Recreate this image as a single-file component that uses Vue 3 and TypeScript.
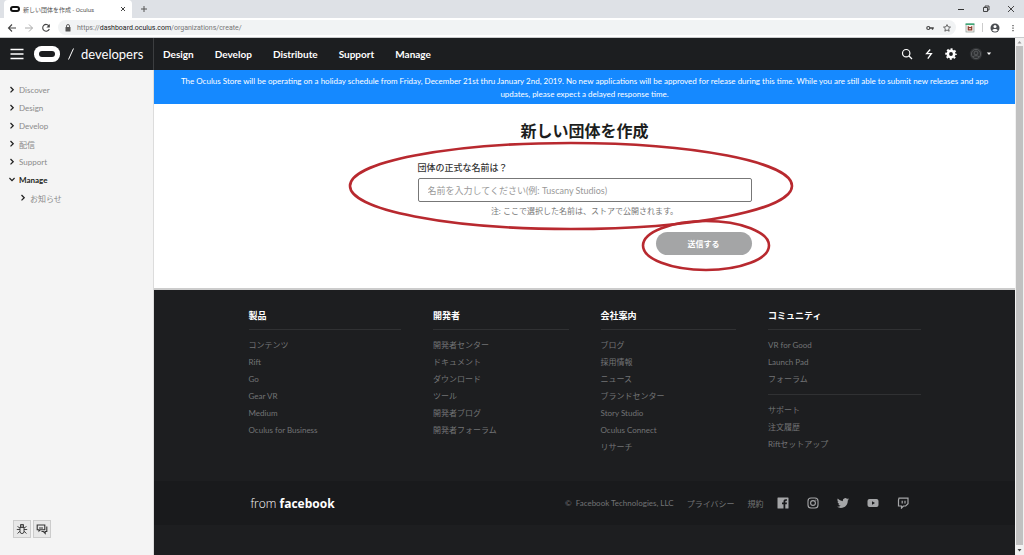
<script setup lang="ts">
import { ref } from 'vue'

interface LinkGroup {
  title: string
  sections: string[][]
}

const organizationName = ref('')
const topLinks: string[] = ['Design', 'Develop', 'Distribute', 'Support', 'Manage']
const sideLinks: string[] = ['Discover', 'Design', 'Develop', '配信', 'Support']
const groups: LinkGroup[] = [
  { title: '製品', sections: [['コンテンツ', 'Rift', 'Go', 'Gear VR', 'Medium', 'Oculus for Business']] },
  {
    title: '開発者',
    sections: [['開発者センター', 'ドキュメント', 'ダウンロード', 'ツール', '開発者ブログ', '開発者フォーラム']],
  },
  {
    title: '会社案内',
    sections: [['ブログ', '採用情報', 'ニュース', 'ブランドセンター', 'Story Studio', 'Oculus Connect', 'リサーチ']],
  },
  {
    title: 'コミュニティ',
    sections: [
      ['VR for Good', 'Launch Pad', 'フォーラム'],
      ['サポート', '注文履歴', 'Riftセットアップ'],
    ],
  },
]
</script>

<template>
  <div class="window">
    <div class="tabstrip">
      <div class="tab">
        <svg class="favicon" viewBox="0 0 10 6"><rect x="1" y="1" width="8" height="4" rx="2" fill="none" stroke="#111" stroke-width="2" /></svg>
        <span class="tab-title">新しい団体を作成 - Oculus</span>
        <button class="plain" aria-label="Close tab">
          <svg width="6" height="6" viewBox="0 0 6 6"><path d="M1 1l4 4M5 1L1 5" stroke="#444" fill="none" /></svg>
        </button>
      </div>
      <button class="plain new-tab" aria-label="New tab">
        <svg width="8" height="8" viewBox="0 0 8 8"><path d="M4 1v6M1 4h6" stroke="#555" fill="none" /></svg>
      </button>
      <div class="window-controls">
        <button class="plain" aria-label="Minimize">
          <svg width="8" height="8" viewBox="0 0 8 8"><path d="M1 4.500h6" stroke="#333" fill="none" /></svg>
        </button>
        <button class="plain" aria-label="Restore">
          <svg width="8" height="8" viewBox="0 0 8 8"><path d="M1.500 2.500h4v4h-4zM3 2.500V1h4v4H5.500" stroke="#333" fill="none" stroke-width=".9" /></svg>
        </button>
        <button class="plain" aria-label="Close window">
          <svg width="8" height="8" viewBox="0 0 8 8"><path d="M1 1l6 6M7 1L1 7" stroke="#333" fill="none" stroke-width=".9" /></svg>
        </button>
      </div>
    </div>

    <div class="toolbar">
      <button class="plain" aria-label="Back">
        <svg width="10" height="10" viewBox="0 0 10 10"><path d="M9 5H1.500M5 1.500L1.500 5 5 8.500" stroke="#444" stroke-width="1.100" fill="none" /></svg>
      </button>
      <button class="plain" aria-label="Forward">
        <svg width="10" height="10" viewBox="0 0 10 10"><path d="M1 5h7.500M5 1.500L8.500 5 5 8.500" stroke="#aaa" stroke-width="1" fill="none" /></svg>
      </button>
      <button class="plain" aria-label="Reload">
        <svg width="10" height="10" viewBox="0 0 10 10"><path d="M8 3A3.400 3.400 0 1 0 8.300 6" stroke="#444" stroke-width="1.100" fill="none" /><path d="M8.800 1v3.400H5.400z" fill="#444" /></svg>
      </button>
      <div class="address">
        <svg width="6" height="8" viewBox="0 0 6 8"><rect x=".5" y="3" width="5" height="4.500" rx=".5" fill="#555" /><path d="M1.500 3.500V2a1.500 1.500 0 0 1 3 0v1.500" stroke="#555" fill="none" stroke-width=".9" /></svg>
        <span class="url">https://<b>dashboard.oculus.com</b>/organizations/create/</span>
        <button class="plain" aria-label="Saved passwords">
          <svg width="8" height="8" viewBox="0 0 8 8"><circle cx="2.300" cy="4" r="1.500" fill="none" stroke="#444" stroke-width="1.200" /><path d="M4 4h3.800M6.500 4v1.800" stroke="#444" stroke-width="1.300" fill="none" /></svg>
        </button>
        <button class="plain" aria-label="Bookmark">
          <svg width="8" height="8" viewBox="0 0 8 8"><path d="M4 .6l1 2.200 2.500.3-1.850 1.650.5 2.450L4 6l-2.150 1.200.5-2.450L.5 3.100 3 2.800z" stroke="#444" stroke-width=".8" fill="none" /></svg>
        </button>
      </div>
      <button class="plain" aria-label="Extension">
        <svg width="10" height="10" viewBox="0 0 10 10"><rect x="1" y="1" width="8" height="8" fill="#f7f2ee" stroke="#8a9a94" stroke-width=".7" /><path d="M.6 1.200h8.800" stroke="#3fa878" stroke-width="1.600" /><path d="M3.300 3.300v3.500h3.400V3.300M3.300 4.600h3.400" fill="none" stroke="#8c3a2c" stroke-width="1.200" /></svg>
      </button>
      <span class="divider"></span>
      <button class="plain profile" aria-label="Profile">
        <svg width="10" height="10" viewBox="0 0 10 10"><circle cx="5" cy="5" r="4.500" fill="#4a4d51" /><circle cx="5" cy="3.600" r="1.500" fill="#fff" /><path d="M2.200 7.200c1-1.700 4.600-1.700 5.600 0-1.300 1.700-4.300 1.700-5.600 0z" fill="#fff" /></svg>
      </button>
      <button class="plain" aria-label="Browser menu">
        <svg width="6" height="8" viewBox="0 0 6 8"><path d="M2.400 1h1.200v1.200H2.400zM2.400 3.500h1.200v1.200H2.400zM2.400 6h1.200v1.200H2.400z" fill="#444" /></svg>
      </button>
    </div>

    <div class="viewport">
      <div class="site">
        <header class="header">
          <div class="brand">
            <button class="plain" aria-label="Open menu">
              <svg width="14" height="12" viewBox="0 0 14 12"><path d="M.5 1.500h13M.5 6h13M.5 10.500h13" stroke="#fff" stroke-width="1.500" /></svg>
            </button>
            <a class="logo" href="#" aria-label="Oculus">
              <svg width="26" height="16" viewBox="0 0 26 16"><rect width="26" height="16" rx="7.500" fill="#fff" /><rect x="5" y="5" width="16" height="6" rx="3" fill="#1c1e20" /></svg>
            </a>
            <svg width="8" height="12" viewBox="0 0 8 12"><path d="M1.500 11.500L6.500.5" stroke="#fff" fill="none" /></svg>
            <span class="brand-name">developers</span>
          </div>
          <nav class="top-nav">
            <a v-for="link in topLinks" :key="link" href="#">{{ link }}</a>
          </nav>
          <div class="tools">
            <button class="plain" aria-label="Search">
              <svg width="12" height="12" viewBox="0 0 12 12"><circle cx="5.200" cy="5.200" r="3.700" stroke="#fff" stroke-width="1.200" fill="none" /><path d="M8 8l3 3" stroke="#fff" stroke-width="1.300" /></svg>
            </button>
            <button class="plain" aria-label="Activity">
              <svg width="8" height="12" viewBox="0 0 8 12"><path d="M5.200 1.500L1.600 5.700h4.800L2.800 10.600" stroke="#fff" stroke-width="1.300" fill="none" /></svg>
            </button>
            <button class="plain" aria-label="Settings">
              <svg width="12" height="12" viewBox="0 0 12 12"><circle cx="6" cy="6" r="3.200" fill="none" stroke="#fff" stroke-width="2.600" /><circle cx="6" cy="6" r="4.900" fill="none" stroke="#fff" stroke-width="1.800" stroke-dasharray="1.950 1.900" stroke-dashoffset="1" /></svg>
            </button>
            <button class="plain account" aria-label="Account">
              <svg width="14" height="14" viewBox="0 0 14 14"><circle cx="7" cy="7" r="6.200" fill="#303234" /><circle cx="7" cy="7" r="4.600" fill="none" stroke="#606264" stroke-width=".8" /><circle cx="7" cy="6" r="1.900" fill="none" stroke="#606264" stroke-width=".8" /><path d="M4 10c1.300-1.800 4.700-1.800 6 0" fill="none" stroke="#606264" stroke-width=".8" /></svg>
              <svg width="6" height="4" viewBox="0 0 6 4"><path d="M.8.500h4.400L3 3z" fill="#fff" /></svg>
            </button>
          </div>
        </header>

        <div class="body">
          <aside class="sidebar">
            <nav class="side-nav">
              <a v-for="link in sideLinks" :key="link" href="#">
                <svg width="6" height="8" viewBox="0 0 6 8"><path d="M1.500 1l2.700 2.700L1.500 6.400" stroke="#222" stroke-width="1.300" fill="none" /></svg>
                {{ link }}
              </a>
              <a class="current" href="#">
                <svg width="6" height="8" viewBox="0 0 6 8"><path d="M.4 2l2.600 2.600L5.600 2" stroke="#222" stroke-width="1.300" fill="none" /></svg>
                Manage
              </a>
              <a class="child" href="#">
                <svg width="6" height="8" viewBox="0 0 6 8"><path d="M1.500 1l2.700 2.700L1.500 6.400" stroke="#222" stroke-width="1.300" fill="none" /></svg>
                お知らせ
              </a>
            </nav>
            <div class="feedback">
              <button aria-label="Report a bug">
                <svg width="12" height="12" viewBox="0 0 12 12" fill="none" stroke="#333" stroke-width=".9"><path d="M4 4.500h4v3.800a2 2.300 0 0 1-4 0zM4.500 4.500v-3h3v3M4.500 3h3M4 6.500H.800M8 6.500h3.200M4 5L1.500 3.500M8 5l2.500-1.500M4 8.200L1.500 10.500M8 8.200l2.500 2.300" /></svg>
              </button>
              <button aria-label="Send feedback">
                <svg width="12" height="12" viewBox="0 0 12 12" fill="none" stroke="#333" stroke-width="1.100"><path d="M1.200 2h7.600v4.800H4.200L3 8V6.800H1.200zM10.800 3.500v5H9.200v1.800L7.400 8.500H5.500M3 5h4" /></svg>
              </button>
            </div>
          </aside>

          <div class="content">
            <p class="notice">The Oculus Store will be operating on a holiday schedule from Friday, December 21st thru January 2nd, 2019. No new applications will be approved for release during this time. While you are still able to submit new releases and app updates, please expect a delayed response time.</p>
            <main class="main">
              <form class="form" @submit.prevent>
                <h1>新しい団体を作成</h1>
                <label for="organization">団体の正式な名前は？</label>
                <input id="organization" v-model="organizationName" type="text" placeholder="名前を入力してください(例: Tuscany Studios)" />
                <p class="hint">注: ここで選択した名前は、ストアで公開されます。</p>
                <button class="submit" type="submit">送信する</button>
                <svg class="marks" width="450" height="134" viewBox="0 0 450 134" fill="none" stroke="#b8292f" stroke-width="2.600">
                  <ellipse cx="225" cy="46" rx="221" ry="43" />
                  <ellipse cx="360" cy="105.500" rx="63" ry="24.500" />
                </svg>
              </form>
            </main>

            <footer class="footer">
              <div class="groups">
                <section v-for="group in groups" :key="group.title" class="group">
                  <h2>{{ group.title }}</h2>
                  <ul v-for="(section, index) in group.sections" :key="index">
                    <li v-for="item in section" :key="item"><a href="#">{{ item }}</a></li>
                  </ul>
                </section>
              </div>
              <div class="legal">
                <div class="legal-inner">
                  <span class="parent">from <b>facebook</b></span>
                  <span class="copyright">©&nbsp; Facebook Technologies, LLC</span>
                  <a href="#">プライバシー</a>
                  <a href="#">規約</a>
                  <div class="social">
                    <a href="#" aria-label="Facebook">
                      <svg width="12" height="12" viewBox="0 0 12 12"><path d="M1 .5h10a.5.500 0 0 1 .5.500v10a.5.500 0 0 1-.5.500H8.300V7.300h1.400l.3-1.700H8.300V4.700c0-.6.300-.9.900-.9H10V2.300H8.700c-1.400 0-2.200.8-2.200 2.200v1.100H5v1.700h1.500v4.200H1a.5.500 0 0 1-.5-.5V1A.5.500 0 0 1 1 .5z" fill="#a5a6a8" /></svg>
                    </a>
                    <a href="#" aria-label="Instagram">
                      <svg width="12" height="12" viewBox="0 0 12 12" fill="none" stroke="#a5a6a8" stroke-width="1.100"><rect x="1" y="1" width="10" height="10" rx="3" /><circle cx="6" cy="6" r="2.400" /><circle cx="8.900" cy="3.100" r=".4" fill="#a5a6a8" stroke-width=".4" /></svg>
                    </a>
                    <a href="#" aria-label="Twitter">
                      <svg width="12" height="12" viewBox="0 0 24 24"><path d="M23.950 4.570a10 10 0 0 1-2.820.77 4.960 4.960 0 0 0 2.160-2.720c-.95.550-2 .95-3.120 1.180a4.920 4.920 0 0 0-8.380 4.480C7.690 8.090 4.070 6.130 1.640 3.160a4.920 4.920 0 0 0 1.520 6.570 4.900 4.900 0 0 1-2.230-.61v.06a4.920 4.920 0 0 0 3.950 4.830 5 5 0 0 1-2.210.08 4.940 4.940 0 0 0 4.600 3.420A9.870 9.870 0 0 1 0 19.540a13.990 13.990 0 0 0 7.550 2.210c9.050 0 14-7.500 14-13.980l-.02-.64a9.940 9.940 0 0 0 2.420-2.560z" fill="#a5a6a8" /></svg>
                    </a>
                    <a href="#" aria-label="YouTube">
                      <svg width="12" height="12" viewBox="0 0 12 12"><rect x=".5" y="2" width="11" height="8" rx="2" fill="#a5a6a8" /><path d="M5 4.300v3.400L8 6z" fill="#191a1c" /></svg>
                    </a>
                    <a href="#" aria-label="Twitch">
                      <svg width="12" height="12" viewBox="0 0 12 12" fill="none" stroke="#a5a6a8" stroke-width="1.200"><path d="M2 1.200h9v5.600L8.700 9H6.500l-2 2V9H1.500V3zM5.200 3.700v2.800M8 3.700v2.800" /></svg>
                    </a>
                  </div>
                </div>
              </div>
            </footer>
          </div>
        </div>
      </div>
      <div class="scrollbar" aria-hidden="true">
        <svg width="9" height="8" viewBox="0 0 9 8"><path d="M2.500 5.500h4l-2-2.500z" fill="#999" /></svg>
        <span class="thumb"></span>
        <svg width="9" height="10" viewBox="0 0 9 10"><path d="M2.500 4h4l-2 2.500z" fill="#444" /></svg>
      </div>
    </div>
  </div>
</template>

<style>
body {
  margin: 0;
}
</style>

<style scoped>
* {
  box-sizing: border-box;
}
.window {
  display: flex;
  flex-direction: column;
  min-height: 100vh;
  font-family: Lato, 'Noto Sans CJK JP', sans-serif;
  font-size: 8px;
  color: #1c1e20;
}
svg {
  display: block;
  flex: none;
}
a {
  color: inherit;
  text-decoration: none;
}
h1,
h2,
p,
ul {
  margin: 0;
  padding: 0;
}
.plain {
  display: flex;
  align-items: center;
  padding: 0;
  border: 0;
  background: none;
}
.tabstrip {
  display: flex;
  align-items: center;
  height: 18px;
  padding: 0 9px 0 4px;
  background: #dee1e6;
  font-family: Roboto, 'Noto Sans CJK JP', sans-serif;
}
.tab {
  display: flex;
  align-items: center;
  width: 128px;
  height: 18px;
  padding: 0 6px;
  background: #fff;
  border-radius: 4px 4px 0 0;
}
.favicon {
  width: 10px;
  height: 6px;
}
.tab-title {
  flex: 1;
  margin-left: 3px;
  font-size: 6px;
  color: #555;
  white-space: nowrap;
}
.new-tab {
  margin-left: 8px;
}
.window-controls {
  display: flex;
  gap: 17px;
  margin-left: auto;
}
.toolbar {
  display: flex;
  align-items: center;
  gap: 7px;
  height: 20px;
  padding: 0 8px 0 7px;
  background: #fff;
  border-bottom: 1px solid #c9cbcd;
}
.address {
  flex: 1;
  display: flex;
  align-items: center;
  gap: 9px;
  height: 15px;
  margin-right: 2px;
  padding: 0 5px 0 7px;
  border-radius: 8px;
  background: #f1f3f4;
}
.url {
  flex: 1;
  margin-left: -3px;
  font-family: Roboto, sans-serif;
  font-size: 7px;
  color: #777;
}
.url b {
  font-weight: 400;
  color: #222;
}
.divider {
  width: 1px;
  height: 9px;
  background: #ccc;
}
.profile {
  margin-right: 3px;
}
.viewport {
  flex: 1;
  display: flex;
}
.site {
  flex: 1;
  display: flex;
  flex-direction: column;
}
.header {
  display: flex;
  align-items: center;
  height: 32px;
  padding-right: 23px;
  background: #1c1e20;
  color: #fff;
}
.brand {
  display: flex;
  align-items: center;
  align-self: stretch;
  width: 154px;
  padding-left: 10px;
  border-right: 1px solid #3c3e40;
}
.logo {
  margin: 0 7px 0 10px;
}
.brand-name {
  margin-left: 6px;
  font-size: 13px;
  line-height: 16px;
}
.top-nav {
  display: flex;
  gap: 21px;
  padding-left: 9px;
  font-size: 10px;
  font-weight: 700;
}
.tools {
  display: flex;
  align-items: center;
  gap: 12px;
  margin-left: auto;
}
.account {
  gap: 3px;
}
.body {
  flex: 1;
  display: flex;
}
.sidebar {
  display: flex;
  flex-direction: column;
  width: 154px;
  padding: 11px 0 17px;
  background: #f4f4f4;
  border-right: 1px solid #dcdcdc;
}
.side-nav a {
  display: flex;
  align-items: center;
  gap: 4px;
  height: 18px;
  padding-left: 9px;
  color: #8a8a8a;
}
.side-nav .current {
  color: #1c1e20;
  font-weight: 700;
}
.side-nav .child {
  padding-left: 20px;
}
.feedback {
  display: flex;
  gap: 2px;
  margin-top: auto;
  padding-left: 13px;
}
.feedback button {
  display: grid;
  place-items: center;
  width: 18px;
  height: 18px;
  padding: 0;
  border: 1px solid #ccc;
  background: #e8e8e8;
}
.content {
  flex: 1;
  display: flex;
  flex-direction: column;
}
.notice {
  padding: 5px 24px 3px;
  background: #1589ff;
  color: #fff;
  font-size: 8px;
  line-height: 13px;
  text-align: center;
}
.main {
  padding: 15px 20px 33px;
  background: #fff;
  border-bottom: 2px solid #ccc;
}
.form {
  position: relative;
  display: flex;
  flex-direction: column;
  max-width: 334px;
  margin: 0 auto;
}
h1 {
  margin-bottom: 18px;
  font-size: 16px;
  line-height: 24px;
  text-align: center;
}
label {
  margin-bottom: 3px;
  font-size: 9px;
  font-weight: 500;
  line-height: 14px;
  color: #333;
}
input {
  height: 24px;
  padding: 0 9px;
  border: 1px solid #777;
  border-radius: 2px;
  background: #fff;
  font: inherit;
  font-size: 9px;
  color: #333;
}
input::placeholder {
  color: #999;
}
.hint {
  margin: 3px 0 15px;
  font-size: 8px;
  line-height: 12px;
  color: #777;
  text-align: center;
}
.submit {
  align-self: flex-end;
  width: 96px;
  height: 23px;
  border: 0;
  border-radius: 12px;
  background: #a4a5a6;
  color: #fff;
  font: inherit;
  font-weight: 700;
}
.marks {
  position: absolute;
  top: 21px;
  left: -72px;
  pointer-events: none;
}
.footer {
  flex: 1;
  background: #1d1e20;
  color: #737476;
}
.groups {
  display: grid;
  grid-template-columns: 9fr 8fr 8fr 9fr;
  gap: 32px;
  max-width: 672px;
  margin: 0 auto;
  padding: 18px 0 19px;
}
.group h2 {
  padding-bottom: 5px;
  font-size: 9px;
  line-height: 16px;
  color: #fff;
}
.group ul {
  padding: 7px 0 6px;
  border-top: 1px solid #303133;
  list-style: none;
}
.group li {
  height: 17px;
  line-height: 17px;
}
.legal {
  background: #191a1c;
}
.legal-inner {
  display: flex;
  align-items: center;
  max-width: 672px;
  height: 44px;
  margin: 0 auto;
  padding: 0 12px 0 2px;
}
.legal-inner > a {
  margin-left: 13px;
}
.parent {
  margin-right: auto;
  font-family: 'Open Sans', sans-serif;
  font-size: 12px;
  font-weight: 300;
  color: #fff;
}
.parent b {
  font-weight: 700;
}
.social {
  display: flex;
  gap: 18px;
  margin-left: 13px;
}
.scrollbar {
  display: flex;
  flex-direction: column;
  width: 9px;
  background: #f1f1f1;
}
.thumb {
  flex: 1;
  margin: 0 1px;
  background: #c1c1c1;
}
</style>
